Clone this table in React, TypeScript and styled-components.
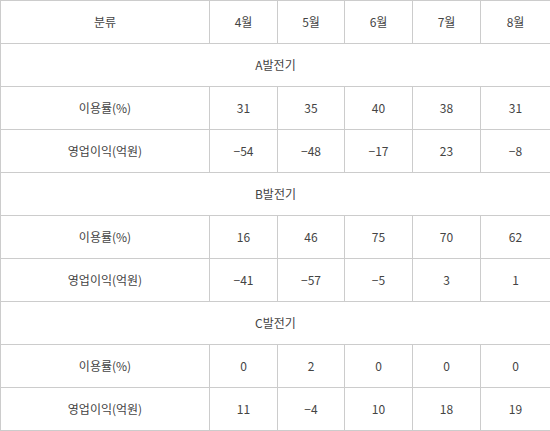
import * as React from "react";
import styled, { createGlobalStyle } from "styled-components";

const GlobalStyle = createGlobalStyle`
  html, body {
    margin: 0;
    padding: 0;
    background: #fff;
  }
`;

const Table = styled.table`
  width: 550px;
  border-collapse: collapse;
  table-layout: fixed;
  font-family: "Noto Sans CJK KR", "Noto Sans", sans-serif;
  font-size: 12px;
  color: #444;
`;

const Cell = styled.td`
  height: 42px;
  padding: 0;
  border: 1px solid #ccc;
  text-align: center;
  vertical-align: middle;
  line-height: 14px;
`;

const months = ["4월", "5월", "6월", "7월", "8월"];
const colWidths = [209, 68, 67, 68, 68, 70];

interface Group {
  name: string;
  usage: number[];
  profit: number[];
}

const groups: Group[] = [
  { name: "A발전기", usage: [31, 35, 40, 38, 31], profit: [-54, -48, -17, 23, -8] },
  { name: "B발전기", usage: [16, 46, 75, 70, 62], profit: [-41, -57, -5, 3, 1] },
  { name: "C발전기", usage: [0, 2, 0, 0, 0], profit: [11, -4, 10, 18, 19] },
];

const fmt = (n: number) => (n < 0 ? `−${Math.abs(n)}` : `${n}`);

export default function App() {
  return (
    <>
      <GlobalStyle />
      <Table>
        <colgroup>
          {colWidths.map((w, i) => (
            <col key={i} style={{ width: w }} />
          ))}
        </colgroup>
        <tbody>
          <tr>
            <Cell>분류</Cell>
            {months.map((m) => (
              <Cell key={m}>{m}</Cell>
            ))}
          </tr>
          {groups.map((g) => (
            <React.Fragment key={g.name}>
              <tr>
                <Cell colSpan={6}>{g.name}</Cell>
              </tr>
              <tr>
                <Cell>이용률(%)</Cell>
                {g.usage.map((v, i) => (
                  <Cell key={i}>{fmt(v)}</Cell>
                ))}
              </tr>
              <tr>
                <Cell>영업이익(억원)</Cell>
                {g.profit.map((v, i) => (
                  <Cell key={i}>{fmt(v)}</Cell>
                ))}
              </tr>
            </React.Fragment>
          ))}
        </tbody>
      </Table>
    </>
  );
}
